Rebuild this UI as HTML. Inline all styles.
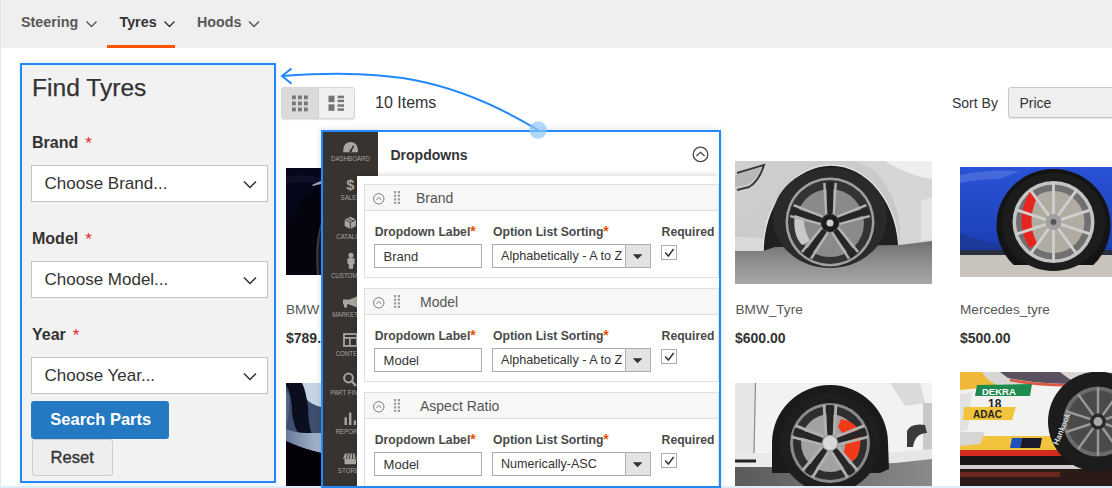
<!DOCTYPE html>
<html><head><meta charset="utf-8">
<style>
*{box-sizing:border-box;margin:0;padding:0}
html,body{width:1112px;height:488px;overflow:hidden;background:#fff}
body{position:relative;font-family:"Liberation Sans",sans-serif;color:#333}
.a{position:absolute}
.t{position:absolute;line-height:1;white-space:nowrap}
.b{font-weight:700}
svg{position:absolute;overflow:visible}
.im{overflow:hidden}
</style></head><body>
<!-- nav -->
<div class="a" style="left:0;top:0;width:1112px;height:48px;background:#efefef"></div>
<div class="t b" style="left:21px;top:14.5px;font-size:14.3px;color:#575757">Steering</div>
<div class="t b" style="left:119.5px;top:14.5px;font-size:14.3px;color:#333">Tyres</div>
<div class="t b" style="left:197px;top:14.5px;font-size:14.3px;color:#575757">Hoods</div>
<svg style="left:0;top:0" width="1112" height="48">
 <g fill="none" stroke="#555" stroke-width="1.4">
  <polyline points="86.5,21.5 91.5,26.5 96.5,21.5"/>
  <polyline points="164.5,21.5 169.5,26.5 174.5,21.5" stroke="#333"/>
  <polyline points="249,21.5 254,26.5 259,21.5"/>
 </g>
</svg>
<div class="a" style="left:107px;top:45px;width:68px;height:3px;background:#ff5501"></div>

<!-- left strip -->
<div class="a" style="left:0;top:0;width:1px;height:488px;background:#d6ecfb"></div>
<div class="a" style="left:0;top:486px;width:1112px;height:2px;background:#dcedfb"></div>

<!-- Find panel -->
<div class="a" style="left:20px;top:63px;width:256px;height:420px;background:#f2f2f2;border:2px solid #2189fb;box-shadow:0 0 5px rgba(0,0,0,.12)"></div>
<div class="t" style="left:32px;top:76.2px;font-size:24.6px;color:#333;-webkit-text-stroke:.25px #333">Find Tyres</div>

<div class="t b" style="left:32px;top:134.5px;font-size:16px;color:#333">Brand <span style="color:#e02b27;font-weight:400;font-size:17px;line-height:0;position:relative;top:1.5px;margin-left:2.5px">*</span></div>
<div class="a" style="left:31px;top:165px;width:237px;height:37px;background:#fff;border:1px solid #c2c2c2"></div>
<div class="t" style="left:44.5px;top:175.3px;font-size:17px;color:#333">Choose Brand...</div>

<div class="t b" style="left:32px;top:230.5px;font-size:16px;color:#333">Model <span style="color:#e02b27;font-weight:400;font-size:17px;line-height:0;position:relative;top:1.5px;margin-left:2.5px">*</span></div>
<div class="a" style="left:31px;top:261px;width:237px;height:37px;background:#fff;border:1px solid #c2c2c2"></div>
<div class="t" style="left:44.5px;top:271.3px;font-size:17px;color:#333">Choose Model...</div>

<div class="t b" style="left:32px;top:326.9px;font-size:16px;color:#333">Year <span style="color:#e02b27;font-weight:400;font-size:17px;line-height:0;position:relative;top:1.5px;margin-left:2.5px">*</span></div>
<div class="a" style="left:31px;top:357px;width:237px;height:37px;background:#fff;border:1px solid #c2c2c2"></div>
<div class="t" style="left:44.5px;top:367.3px;font-size:17px;color:#333">Choose Year...</div>

<svg style="left:0;top:0" width="300" height="488">
 <g fill="none" stroke="#333" stroke-width="1.5">
  <polyline points="244,181.5 250,187.5 256,181.5"/>
  <polyline points="244,277.5 250,283.5 256,277.5"/>
  <polyline points="244,373.5 250,379.5 256,373.5"/>
 </g>
</svg>

<div class="a" style="left:31px;top:401px;width:137.5px;height:37.5px;background:#2479c2;border-radius:3px"></div>
<div class="t b" style="left:50.3px;top:411.4px;font-size:16.5px;color:#fff">Search Parts</div>
<div class="a" style="left:31.5px;top:439px;width:81px;height:37px;background:#eee;border:1px solid #cdcdcd;border-radius:3px"></div>
<div class="t" style="left:50.5px;top:450px;font-size:16.6px;color:#333;-webkit-text-stroke:.35px #333">Reset</div>

<!-- toolbar -->
<div class="a" style="left:281px;top:87px;width:74px;height:31.5px;background:#f0f0f0;border-radius:3px;border:1px solid #d6d6d6;box-shadow:0 1px 1px rgba(0,0,0,.12)"></div>
<div class="a" style="left:282px;top:88px;width:37px;height:29.5px;background:#dadada;border-radius:2px 0 0 2px;border-right:1px solid #d0d0d0"></div>
<svg style="left:0;top:0" width="400" height="130">
 <g fill="#757575">
  <rect x="292" y="95.5" width="3.8" height="3.8"/><rect x="298" y="95.5" width="3.8" height="3.8"/><rect x="304" y="95.5" width="3.8" height="3.8"/>
  <rect x="292" y="101.5" width="3.8" height="3.8"/><rect x="298" y="101.5" width="3.8" height="3.8"/><rect x="304" y="101.5" width="3.8" height="3.8"/>
  <rect x="292" y="107.5" width="3.8" height="3.8"/><rect x="298" y="107.5" width="3.8" height="3.8"/><rect x="304" y="107.5" width="3.8" height="3.8"/>
  <rect x="328.5" y="95.7" width="6" height="6.5"/><rect x="328.5" y="104.3" width="6" height="6.5"/>
  <rect x="337.5" y="95.7" width="6.5" height="2.5"/><rect x="337.5" y="99.7" width="6.5" height="2.5"/>
  <rect x="337.5" y="104.3" width="6.5" height="2.5"/><rect x="337.5" y="108.3" width="6.5" height="2.5"/>
 </g>
</svg>
<div class="t" style="left:375px;top:94.8px;font-size:16px;color:#333">10 Items</div>
<div class="t" style="left:952px;top:95.5px;font-size:14px;color:#333">Sort By</div>
<div class="a" style="left:1008px;top:87px;width:120px;height:31px;background:#efefef;border:1px solid #c7c7c7;border-radius:3px;box-shadow:0 1px 1px rgba(0,0,0,.1)"></div>
<div class="t" style="left:1019.5px;top:95.6px;font-size:14px;color:#333">Price</div>

<!-- PRODUCTS -->
<!--IMG-->
<svg class="im" style="left:286px;top:168px" width="197" height="107">
 <rect width="197" height="107" fill="#06061a"/>
 <path d="M0,8 Q20,6 35,10 L35,16 Q18,12 0,16Z" fill="#12132c" opacity=".8"/>
 <path d="M26,17 Q30,15 35,13 L35,16 Q30,17 27,18Z" fill="#a8a8c8"/>
 <path d="M0,60 Q14,30 35,18 L35,107 L0,107Z" fill="#04040e"/>
 <path d="M35,55 Q28,75 31,107 L35,107Z" fill="#3a3a44"/>
 <path d="M35,62 Q31,80 33,107 L35,107Z" fill="#15151c"/>
</svg>
<svg class="im" style="left:286px;top:383px" width="197" height="103">
 <defs><linearGradient id="c2" x1="0" y1="0" x2="1" y2="0"><stop offset="0" stop-color="#6a7c9c"/><stop offset="1" stop-color="#a8b8cc"/></linearGradient></defs>
 <rect width="197" height="103" fill="#020208"/>
 <rect width="35" height="66" fill="#3e4e6e"/>
 <path d="M16,0 L35,0 L35,24 Q26,22 20,16Z" fill="#c4d4e4"/>
 <path d="M0,2 Q6,12 6,30 Q8,46 14,52 L26,52 Q22,40 22,24 Q20,8 16,0 L0,0Z" fill="#0a0e1e"/>
 <path d="M0,8 L3,12 Q4,30 0,46Z" fill="#56668a"/>
 <path d="M0,46 Q10,50 20,50 L35,50 L35,70 Q18,66 8,62 L0,58Z" fill="url(#c2)"/>
 <path d="M0,58 Q18,66 35,70 L35,103 L0,103Z" fill="#020208"/>
</svg>
<div class="t" style="left:286px;top:302.9px;font-size:13.6px;color:#575757">BMW Tyre 2</div>
<div class="t b" style="left:286px;top:331px;font-size:14px;color:#333">$789.00</div>
<svg class="im" style="left:735px;top:161px" width="197" height="123">
 <defs>
  <linearGradient id="gb" x1="0" y1="0" x2="1" y2="1"><stop offset="0" stop-color="#d0d0d0"/><stop offset="1" stop-color="#c2c2c2"/></linearGradient>
  <linearGradient id="gg" x1="0" y1="0" x2="0" y2="1"><stop offset="0" stop-color="#6e6e6e"/><stop offset=".4" stop-color="#8a8a8a"/><stop offset="1" stop-color="#a6a6a6"/></linearGradient>
 </defs>
 <rect width="197" height="123" fill="url(#gb)"/>
 <path d="M120,0 L197,0 L197,90 L165,88 Q168,40 140,10Z" fill="#d6d6d6"/>
 <path d="M150,0 L197,0 L197,18 Q172,14 155,3Z" fill="#eeeeee"/>
 <path d="M186,40 L197,36 L197,78 L186,80Z" fill="#e4e4e4"/>
 <path d="M0,76 L28,77 L28,90 L0,90Z" fill="#dadada"/>
 <path d="M2,12 L29,4 Q24,20 14,26 L2,29" fill="none" stroke="#3a3a3a" stroke-width="2"/>
 <path d="M0,14 L26,6 Q22,18 12,24 L0,26Z" fill="#b8b8b8"/>
 <path d="M28,92 A68,88 0 0 1 164,92 Z" fill="#202020"/>
 <path d="M28,92 A68,88 0 0 1 164,92" fill="none" stroke="#e2e2e2" stroke-width="1.4"/>
 <path d="M0,90 L28,90 L40,86 L164,84 L197,80 L197,123 L0,123Z" fill="url(#gg)"/>
 <ellipse cx="95" cy="57" rx="57" ry="50" fill="#2a2a2a"/>
 <circle cx="95" cy="61" r="44.5" fill="#a0a0a0"/>
 <circle cx="95" cy="61" r="42" fill="#333"/>
 <circle cx="95" cy="62" r="34" fill="#8a8a8a"/>
 <path d="M60,52 Q57,74 67,84 L75,80 Q67,66 69,50Z" fill="#c8c8c8"/>
 <line x1="95.0" y1="53.0" x2="95.0" y2="21.0" stroke="#262626" stroke-width="6.5" /><line x1="103.6" y1="59.2" x2="134.0" y2="49.3" stroke="#262626" stroke-width="6.5" /><line x1="100.3" y1="69.3" x2="119.1" y2="95.2" stroke="#262626" stroke-width="6.5" /><line x1="89.7" y1="69.3" x2="70.9" y2="95.2" stroke="#262626" stroke-width="6.5" /><line x1="86.4" y1="59.2" x2="56.0" y2="49.3" stroke="#262626" stroke-width="6.5" /><line x1="91.2" y1="53.0" x2="89.3" y2="22.0" stroke="#b4b4b4" stroke-width="2.4" /><line x1="98.8" y1="53.0" x2="100.7" y2="22.0" stroke="#b4b4b4" stroke-width="2.4" /><line x1="102.4" y1="55.6" x2="131.3" y2="44.2" stroke="#b4b4b4" stroke-width="2.4" /><line x1="104.7" y1="62.8" x2="134.8" y2="55.1" stroke="#b4b4b4" stroke-width="2.4" /><line x1="103.4" y1="67.0" x2="123.1" y2="91.0" stroke="#b4b4b4" stroke-width="2.4" /><line x1="97.2" y1="71.5" x2="113.9" y2="97.7" stroke="#b4b4b4" stroke-width="2.4" /><line x1="92.8" y1="71.5" x2="76.1" y2="97.7" stroke="#b4b4b4" stroke-width="2.4" /><line x1="86.6" y1="67.0" x2="66.9" y2="91.0" stroke="#b4b4b4" stroke-width="2.4" /><line x1="85.3" y1="62.8" x2="55.2" y2="55.1" stroke="#b4b4b4" stroke-width="2.4" /><line x1="87.6" y1="55.6" x2="58.7" y2="44.2" stroke="#b4b4b4" stroke-width="2.4" />
 <circle cx="95" cy="62" r="9" fill="#1c1c1c"/>
 <circle cx="95" cy="62" r="3.5" fill="#cfcfcf"/>
</svg>
<div class="t" style="left:735.5px;top:302.9px;font-size:13.6px;color:#575757">BMW_Tyre</div>
<div class="t b" style="left:735px;top:331px;font-size:14px;color:#333">$600.00</div>
<svg class="im" style="left:960px;top:167px" width="152" height="110">
 <defs><linearGradient id="gm" x1="0" y1="0" x2="0" y2="1"><stop offset="0" stop-color="#2a52d6"/><stop offset=".7" stop-color="#1d40b8"/><stop offset="1" stop-color="#12308e"/></linearGradient></defs>
 <rect width="152" height="110" fill="url(#gm)"/>
 <path d="M0,8 Q30,2 60,4 L40,12 Q20,12 0,16Z" fill="#5a7ae0" opacity=".6"/>
 <path d="M0,66 Q20,74 40,76 L40,83 L0,83Z" fill="#1c3a9c"/>
 <rect y="83" width="152" height="5" fill="#2a2f40"/>
 <rect y="88" width="152" height="22" fill="#c8c4bd"/>
 <ellipse cx="93.5" cy="58" rx="57" ry="56" fill="#141414"/>
 <rect x="0" y="98" width="152" height="12" fill="#c8c4bd"/>
 <ellipse cx="93.5" cy="55" rx="52" ry="49" fill="#1c1c1c"/>
 <circle cx="93.5" cy="55" r="41" fill="#c4c4c4"/>
 <circle cx="93.5" cy="55" r="37.5" fill="#707070"/>
 <circle cx="93.5" cy="55" r="31" fill="#b0aca2"/>
 <path d="M69.5,25 Q53.5,55 69.5,81 L77.5,77 Q65.5,55 77.5,29Z" fill="#e8241e"/>
 <line x1="93.5" y1="48.0" x2="93.5" y2="16.0" stroke="#cfcfcf" stroke-width="2.8" /><line x1="97.6" y1="49.3" x2="116.4" y2="23.4" stroke="#cfcfcf" stroke-width="2.8" /><line x1="100.2" y1="52.8" x2="130.6" y2="42.9" stroke="#cfcfcf" stroke-width="2.8" /><line x1="100.2" y1="57.2" x2="130.6" y2="67.1" stroke="#cfcfcf" stroke-width="2.8" /><line x1="97.6" y1="60.7" x2="116.4" y2="86.6" stroke="#cfcfcf" stroke-width="2.8" /><line x1="93.5" y1="62.0" x2="93.5" y2="94.0" stroke="#cfcfcf" stroke-width="2.8" /><line x1="89.4" y1="60.7" x2="70.6" y2="86.6" stroke="#cfcfcf" stroke-width="2.8" /><line x1="86.8" y1="57.2" x2="56.4" y2="67.1" stroke="#cfcfcf" stroke-width="2.8" /><line x1="86.8" y1="52.8" x2="56.4" y2="42.9" stroke="#cfcfcf" stroke-width="2.8" /><line x1="89.4" y1="49.3" x2="70.6" y2="23.4" stroke="#cfcfcf" stroke-width="2.8" />
 <circle cx="93.5" cy="55" r="8" fill="#a0a0a0"/>
 <circle cx="93.5" cy="55" r="3" fill="#555"/>
</svg>
<div class="t" style="left:960px;top:302.9px;font-size:13.6px;color:#575757">Mercedes_tyre</div>
<div class="t b" style="left:960px;top:331px;font-size:14px;color:#333">$500.00</div>
<svg class="im" style="left:735px;top:383px" width="197" height="103">
 <defs><linearGradient id="rd" x1="0" y1="0" x2="1" y2="0"><stop offset="0" stop-color="#5a5a5a"/><stop offset="1" stop-color="#8a8a8a"/></linearGradient></defs>
 <rect width="197" height="103" fill="#f2f2f2"/>
 <rect width="20" height="70" fill="#e6e6e6"/>
 <path d="M20.5,0 L19,70" stroke="#8a8a8a" stroke-width="1.2"/>
 <path d="M0,70 L38,70 L38,84 L0,84Z" fill="#eaeaea"/>
 <path d="M0,78 L21,78" stroke="#222" stroke-width="3"/>
 <path d="M155,0 L185,0 L190,20 L170,23Z" fill="#dadada"/>
 <rect x="188" y="20" width="9" height="50" fill="#c8c8c8"/>
 <path d="M172,48 Q176,40 190,42 L192,50 Q180,50 178,64 L172,64Z" fill="#3a3a3a"/>
 <path d="M150,70 L197,66 L197,80 L152,82Z" fill="#e6e6e6"/>
 <path d="M0,84 L38,84 L160,80 L197,76 L197,103 L0,103Z" fill="url(#rd)"/>
 <path d="M37,90 L37,60 A58,58 0 0 1 153,60 L154,86 L145,90Z" fill="#1a1a1a"/>
 <circle cx="95" cy="60" r="50" fill="#1e1e1e"/>
 <circle cx="95" cy="60" r="40" fill="#8a8a8a"/>
 <circle cx="95" cy="60" r="37" fill="#2e2e2e"/>
 <circle cx="95" cy="60" r="29" fill="#a2a2a2"/>
 <path d="M106,36 Q129,40 125,64 Q123,78 115,78 L107,72 Q115,60 103,44Z" fill="#f23a1a"/>
 <line x1="95.0" y1="52.0" x2="95.0" y2="22.0" stroke="#262626" stroke-width="7" /><line x1="102.6" y1="57.5" x2="131.1" y2="48.3" stroke="#262626" stroke-width="7" /><line x1="99.7" y1="66.5" x2="117.3" y2="90.7" stroke="#262626" stroke-width="7" /><line x1="90.3" y1="66.5" x2="72.7" y2="90.7" stroke="#262626" stroke-width="7" /><line x1="87.4" y1="57.5" x2="58.9" y2="48.3" stroke="#262626" stroke-width="7" /><line x1="91.0" y1="52.0" x2="89.0" y2="22.0" stroke="#b0b0b0" stroke-width="2.8" /><line x1="99.0" y1="52.0" x2="101.0" y2="22.0" stroke="#b0b0b0" stroke-width="2.8" /><line x1="101.4" y1="53.7" x2="129.3" y2="42.6" stroke="#b0b0b0" stroke-width="2.8" /><line x1="103.8" y1="61.3" x2="133.0" y2="54.0" stroke="#b0b0b0" stroke-width="2.8" /><line x1="102.9" y1="64.1" x2="122.2" y2="87.2" stroke="#b0b0b0" stroke-width="2.8" /><line x1="96.5" y1="68.8" x2="112.5" y2="94.3" stroke="#b0b0b0" stroke-width="2.8" /><line x1="93.5" y1="68.8" x2="77.5" y2="94.3" stroke="#b0b0b0" stroke-width="2.8" /><line x1="87.1" y1="64.1" x2="67.8" y2="87.2" stroke="#b0b0b0" stroke-width="2.8" /><line x1="86.2" y1="61.3" x2="57.0" y2="54.0" stroke="#b0b0b0" stroke-width="2.8" /><line x1="88.6" y1="53.7" x2="60.7" y2="42.6" stroke="#b0b0b0" stroke-width="2.8" />
 <circle cx="95" cy="60" r="7" fill="#d8d8d8"/>
</svg>
<svg class="im" style="left:960px;top:372px" width="152" height="114">
 <rect width="152" height="114" fill="#f2f2f0"/>
 <rect width="152" height="12" fill="#d8d6d4"/>
 <path d="M0,0 L22,0 Q28,10 40,14 L0,18Z" fill="#f0b838"/>
 <path d="M40,0 L100,0 Q110,8 118,12 Q80,12 48,6Z" fill="#5a5060"/>
 <path d="M50,8 Q80,14 118,13" stroke="#d85a40" stroke-width="2.5" fill="none"/>
 <path d="M0,22 L12,20 L8,58 L0,60Z" fill="#e2e2e2"/>
 <path d="M17,13 L72,12 L70,24 L15,24Z" fill="#1f8a50"/>
 <text x="22" y="22.5" font-family="Liberation Sans" font-weight="700" font-size="9.5" fill="#fff">DEKRA</text>
 <text x="28" y="36" font-family="Liberation Sans" font-weight="700" font-size="12" fill="#222">18</text>
 <path d="M4,35 L56,35 L52,48 L3,48Z" fill="#f2c43c"/>
 <text x="13" y="46" font-family="Liberation Sans" font-weight="700" font-size="10" fill="#222">ADAC</text>
 <rect y="64" width="112" height="14" fill="#f2c43c"/>
 <path d="M0,60 L25,60 L20,72 L0,74Z" fill="#d6d6d6"/>
 <path d="M52,66 L62,66 L60,76 L50,76Z" fill="#2050c0"/>
 <path d="M62,66 L82,66 L80,76 L60,76Z" fill="#1a1a2a"/>
 <rect y="78" width="112" height="6" fill="#d42a20"/>
 <rect y="84" width="152" height="9" fill="#1a1616"/>
 <rect y="93" width="152" height="4" fill="#cfcfcf"/>
 <rect y="97" width="152" height="17" fill="#2a1a18"/>
 <rect y="100" width="100" height="5" fill="#7a2a20" opacity=".8"/>
 <circle cx="138" cy="49.60000000000002" r="50" fill="#1c1c1c"/>
 <circle cx="138" cy="49.60000000000002" r="35" fill="#6a6a6a"/>
 <circle cx="138" cy="49.60000000000002" r="31" fill="#4a4a4a"/>
 <line x1="138.0" y1="43.6" x2="138.0" y2="15.6" stroke="#9a9a9a" stroke-width="2.4" /><line x1="141.5" y1="44.7" x2="158.0" y2="22.1" stroke="#9a9a9a" stroke-width="2.4" /><line x1="143.7" y1="47.7" x2="170.3" y2="39.1" stroke="#9a9a9a" stroke-width="2.4" /><line x1="143.7" y1="51.5" x2="170.3" y2="60.1" stroke="#9a9a9a" stroke-width="2.4" /><line x1="141.5" y1="54.5" x2="158.0" y2="77.1" stroke="#9a9a9a" stroke-width="2.4" /><line x1="138.0" y1="55.6" x2="138.0" y2="83.6" stroke="#9a9a9a" stroke-width="2.4" /><line x1="134.5" y1="54.5" x2="118.0" y2="77.1" stroke="#9a9a9a" stroke-width="2.4" /><line x1="132.3" y1="51.5" x2="105.7" y2="60.1" stroke="#9a9a9a" stroke-width="2.4" /><line x1="132.3" y1="47.7" x2="105.7" y2="39.1" stroke="#9a9a9a" stroke-width="2.4" /><line x1="134.5" y1="44.7" x2="118.0" y2="22.1" stroke="#9a9a9a" stroke-width="2.4" />
 <circle cx="138" cy="49.60000000000002" r="8" fill="#2a2a2a"/>
 <circle cx="138" cy="49.60000000000002" r="4.5" fill="#aaa"/>
 <text transform="translate(98,73.60000000000002) rotate(-68)" font-family="Liberation Sans" font-weight="700" font-size="8" fill="#ddd">Hankook</text>
</svg>
<!--/IMG-->

<!-- Dropdowns panel -->
<div class="a" style="left:321px;top:130px;width:400px;height:358px;border:2px solid #2189fb;background:#fff;box-shadow:0 0 7px rgba(0,0,0,.13)"></div>
<div class="a" style="left:323px;top:132px;width:55px;height:354px;background:#373330"></div>
<svg style="left:0;top:0" width="400" height="488">
 <g fill="#aaa59f">
  <path d="M343.3,152.2 L343.3,149.2 A7.3,7.3 0 0 1 357.9,149.2 L357.9,152.2 Z"/>
  <path d="M356,219.5 L350.4,216.7 L344.7,219.5 L344.7,226 L350.4,228.9 L356,226 Z"/>
  <circle cx="351" cy="255.3" r="2.6"/>
  <path d="M347.3,258.5 Q351,257.4 354.7,258.5 L354.5,264 L353.3,264 L353,268.7 L349,268.7 L348.7,264 L347.5,264 Z"/>
  <path d="M348,300 L357,296.5 L357,307.5 L348,304Z"/>
  <rect x="343" y="299.5" width="5" height="5"/><rect x="344" y="304" width="3" height="3.5"/>
  <rect x="344.5" y="417.3" width="2.4" height="7.7"/><rect x="349" y="412.7" width="2.4" height="12.3"/><rect x="353.7" y="420.4" width="2.4" height="4.6"/>
  <path d="M345,453.5 L355,453.5 L357,458.8 L343,458.8Z"/>
  <rect x="344.5" y="458.8" width="11.5" height="5.4"/>
 </g>
 <g stroke="#373330" stroke-width="0.9" fill="none">
  <path d="M350.6,151.5 L353.6,145.5"/>
  <path d="M344.7,219.5 L350.4,222.4 L356,219.5 M350.4,222.4 L350.4,228.9 M347.5,218.1 L353.2,220.9"/>
  <path d="M347.5,453.5 L346.5,458.8 M350,453.5 L349.5,458.8 M352.5,453.5 L352.5,458.8 M355,453.5 L355.5,458.8"/>
 </g>
 <path d="M350.6,151.5 L353.4,146" stroke="#373330" stroke-width="1.6"/>
 <circle cx="350.6" cy="151" r="1.3" fill="#373330"/>
 <rect x="344" y="334" width="13" height="12" fill="none" stroke="#aaa59f" stroke-width="1.8"/>
 <rect x="344" y="337" width="13" height="1.8" fill="#aaa59f"/>
 <rect x="349" y="338" width="1.6" height="8" fill="#aaa59f"/>
 <circle cx="348.5" cy="378" r="4.4" fill="none" stroke="#aaa59f" stroke-width="2"/>
 <path d="M351.5,381 L356,386" stroke="#aaa59f" stroke-width="2.4"/>
 <g font-family="Liberation Sans" font-size="7.1" fill="#aaa59f"><text x="350.5" y="161" text-anchor="middle" textLength="39.0" lengthAdjust="spacingAndGlyphs">DASHBOARD</text><text x="350.5" y="200" text-anchor="middle" textLength="19.9" lengthAdjust="spacingAndGlyphs">SALES</text><text x="350.5" y="238.8" text-anchor="middle" textLength="28.5" lengthAdjust="spacingAndGlyphs">CATALOG</text><text x="350.5" y="278" text-anchor="middle" textLength="39.2" lengthAdjust="spacingAndGlyphs">CUSTOMERS</text><text x="350.5" y="317" text-anchor="middle" textLength="36.6" lengthAdjust="spacingAndGlyphs">MARKETING</text><text x="350.5" y="356" text-anchor="middle" textLength="29.7" lengthAdjust="spacingAndGlyphs">CONTENT</text><text x="350.5" y="395" text-anchor="middle" textLength="40.4" lengthAdjust="spacingAndGlyphs">PART FINDER</text><text x="350.5" y="433.8" text-anchor="middle" textLength="29.7" lengthAdjust="spacingAndGlyphs">REPORTS</text><text x="350.5" y="472.8" text-anchor="middle" textLength="25.3" lengthAdjust="spacingAndGlyphs">STORES</text></g>
 <text x="346.3" y="190.3" font-family="Liberation Sans" font-weight="700" font-size="14.6" fill="#aaa59f">$</text>
</svg>
<div class="t b" style="left:390.5px;top:148px;font-size:14px;color:#333">Dropdowns</div>
<svg style="left:0;top:0" width="730" height="488"><circle cx="700.5" cy="154.4" r="7.3" fill="none" stroke="#4a4542" stroke-width="1.3"/><polyline points="696.4,156 700.5,152.3 704.6,156" fill="none" stroke="#4a4542" stroke-width="1.3"/></svg>
<div class="a" style="left:357px;top:176px;width:362px;height:310px;background:#fff;box-shadow:-1px -2px 4px rgba(0,0,0,.12)"></div>
<div class="a" style="left:364px;top:184px;width:355px;height:94px;border:1px solid #e0e0e0;background:#fff"></div>
<div class="a" style="left:364px;top:184px;width:355px;height:26.5px;border:1px solid #e0e0e0;background:#f7f7f7"></div>
<svg style="left:0;top:0" width="730" height="488">
 <circle cx="378.8" cy="198.8" r="5.2" fill="none" stroke="#777" stroke-width="1"/>
 <polyline points="376.3,199.8 378.8,197.60000000000002 381.3,199.8" fill="none" stroke="#777" stroke-width="1"/>
 <g fill="#9a9a9a">
  <rect x="394" y="191" width="2.2" height="2.2"/><rect x="397.8" y="191" width="2.2" height="2.2"/>
  <rect x="394" y="194.6" width="2.2" height="2.2"/><rect x="397.8" y="194.6" width="2.2" height="2.2"/>
  <rect x="394" y="198.2" width="2.2" height="2.2"/><rect x="397.8" y="198.2" width="2.2" height="2.2"/>
  <rect x="394" y="201.8" width="2.2" height="2.2"/><rect x="397.8" y="201.8" width="2.2" height="2.2"/>
 </g>
</svg>
<div class="t" style="left:416px;top:191.4px;font-size:14px;color:#555">Brand</div>
<div class="t b" style="left:374.8px;top:225.8px;font-size:12.2px;color:#4a4a4a">Dropdown Label<span style="color:#eb5202;font-size:14px;line-height:0">*</span></div>
<div class="t b" style="left:493px;top:225.8px;font-size:12.2px;color:#4a4a4a">Option List Sorting<span style="color:#eb5202;font-size:14px;line-height:0">*</span></div>
<div class="t b" style="left:661.6px;top:225.8px;font-size:12.2px;color:#4a4a4a">Required</div>
<div class="a" style="left:374px;top:244px;width:108px;height:24px;border:1px solid #adadad;background:#fff"></div>
<div class="t" style="left:383.6px;top:250px;font-size:13px;color:#333">Brand</div>
<div class="a" style="left:492px;top:244px;width:159px;height:24px;border:1px solid #adadad;background:#fff"></div>
<div class="a" style="left:625px;top:245px;width:25px;height:22px;border-left:1px solid #adadad;background:#e3e3e3"></div>
<div class="t" style="left:501px;top:250.4px;font-size:12.6px;color:#333">Alphabetically - A to Z</div>
<div class="a" style="left:661px;top:244.5px;width:16px;height:15.5px;border:1px solid #adadad;background:#fff"></div>
<div class="a" style="left:364px;top:288px;width:355px;height:94px;border:1px solid #e0e0e0;background:#fff"></div>
<div class="a" style="left:364px;top:288px;width:355px;height:26.5px;border:1px solid #e0e0e0;background:#f7f7f7"></div>
<svg style="left:0;top:0" width="730" height="488">
 <circle cx="378.8" cy="302.8" r="5.2" fill="none" stroke="#777" stroke-width="1"/>
 <polyline points="376.3,303.8 378.8,301.6 381.3,303.8" fill="none" stroke="#777" stroke-width="1"/>
 <g fill="#9a9a9a">
  <rect x="394" y="295" width="2.2" height="2.2"/><rect x="397.8" y="295" width="2.2" height="2.2"/>
  <rect x="394" y="298.6" width="2.2" height="2.2"/><rect x="397.8" y="298.6" width="2.2" height="2.2"/>
  <rect x="394" y="302.2" width="2.2" height="2.2"/><rect x="397.8" y="302.2" width="2.2" height="2.2"/>
  <rect x="394" y="305.8" width="2.2" height="2.2"/><rect x="397.8" y="305.8" width="2.2" height="2.2"/>
 </g>
</svg>
<div class="t" style="left:420px;top:295.4px;font-size:14px;color:#555">Model</div>
<div class="t b" style="left:374.8px;top:329.8px;font-size:12.2px;color:#4a4a4a">Dropdown Label<span style="color:#eb5202;font-size:14px;line-height:0">*</span></div>
<div class="t b" style="left:493px;top:329.8px;font-size:12.2px;color:#4a4a4a">Option List Sorting<span style="color:#eb5202;font-size:14px;line-height:0">*</span></div>
<div class="t b" style="left:661.6px;top:329.8px;font-size:12.2px;color:#4a4a4a">Required</div>
<div class="a" style="left:374px;top:348px;width:108px;height:24px;border:1px solid #adadad;background:#fff"></div>
<div class="t" style="left:383.6px;top:354px;font-size:13px;color:#333">Model</div>
<div class="a" style="left:492px;top:348px;width:159px;height:24px;border:1px solid #adadad;background:#fff"></div>
<div class="a" style="left:625px;top:349px;width:25px;height:22px;border-left:1px solid #adadad;background:#e3e3e3"></div>
<div class="t" style="left:501px;top:354.4px;font-size:12.6px;color:#333">Alphabetically - A to Z</div>
<div class="a" style="left:661px;top:348.5px;width:16px;height:15.5px;border:1px solid #adadad;background:#fff"></div>
<div class="a" style="left:364px;top:392px;width:355px;height:100px;border:1px solid #e0e0e0;background:#fff"></div>
<div class="a" style="left:364px;top:392px;width:355px;height:26.5px;border:1px solid #e0e0e0;background:#f7f7f7"></div>
<svg style="left:0;top:0" width="730" height="488">
 <circle cx="378.8" cy="406.8" r="5.2" fill="none" stroke="#777" stroke-width="1"/>
 <polyline points="376.3,407.8 378.8,405.6 381.3,407.8" fill="none" stroke="#777" stroke-width="1"/>
 <g fill="#9a9a9a">
  <rect x="394" y="399" width="2.2" height="2.2"/><rect x="397.8" y="399" width="2.2" height="2.2"/>
  <rect x="394" y="402.6" width="2.2" height="2.2"/><rect x="397.8" y="402.6" width="2.2" height="2.2"/>
  <rect x="394" y="406.2" width="2.2" height="2.2"/><rect x="397.8" y="406.2" width="2.2" height="2.2"/>
  <rect x="394" y="409.8" width="2.2" height="2.2"/><rect x="397.8" y="409.8" width="2.2" height="2.2"/>
 </g>
</svg>
<div class="t" style="left:420px;top:399.4px;font-size:14px;color:#555">Aspect Ratio</div>
<div class="t b" style="left:374.8px;top:433.8px;font-size:12.2px;color:#4a4a4a">Dropdown Label<span style="color:#eb5202;font-size:14px;line-height:0">*</span></div>
<div class="t b" style="left:493px;top:433.8px;font-size:12.2px;color:#4a4a4a">Option List Sorting<span style="color:#eb5202;font-size:14px;line-height:0">*</span></div>
<div class="t b" style="left:661.6px;top:433.8px;font-size:12.2px;color:#4a4a4a">Required</div>
<div class="a" style="left:374px;top:452px;width:108px;height:24px;border:1px solid #adadad;background:#fff"></div>
<div class="t" style="left:383.6px;top:458px;font-size:13px;color:#333">Model</div>
<div class="a" style="left:492px;top:452px;width:159px;height:24px;border:1px solid #adadad;background:#fff"></div>
<div class="a" style="left:625px;top:453px;width:25px;height:22px;border-left:1px solid #adadad;background:#e3e3e3"></div>
<div class="t" style="left:501px;top:458.4px;font-size:12.6px;color:#333">Numerically-ASC</div>
<div class="a" style="left:661px;top:452.5px;width:16px;height:15.5px;border:1px solid #adadad;background:#fff"></div>
<svg style="left:0;top:0" width="730" height="488"><g fill="none" stroke="#333" stroke-width="1.45"><polyline points="665.2,252.5 668.4,256 673.6,249"/><polyline points="665.2,356.5 668.4,360 673.6,353"/><polyline points="665.2,460.5 668.4,464 673.6,457"/></g></svg>
<svg style="left:0;top:0" width="730" height="488"><g fill="#333"><polygon points="632.7,254.3 642.5,254.3 637.6,259.3"/><polygon points="632.7,358.3 642.5,358.3 637.6,363.3"/><polygon points="632.7,462.3 642.5,462.3 637.6,467.3"/></g></svg>
<div class="a" style="left:321px;top:486px;width:400px;height:2px;background:#2189fb"></div>
<div class="a" style="left:719px;top:130px;width:2px;height:358px;background:#2189fb"></div>
<svg style="left:0;top:0" width="1112" height="488">
 <path d="M282,76 C385,68 452,78 538,130" fill="none" stroke="#2189fb" stroke-width="2"/>
 <polyline points="291.5,68.5 282,76 291.5,83.7" fill="none" stroke="#2189fb" stroke-width="2"/>
 <circle cx="538" cy="130" r="8.8" fill="#8ec8f8" opacity=".7"/>
</svg>

</body></html>
